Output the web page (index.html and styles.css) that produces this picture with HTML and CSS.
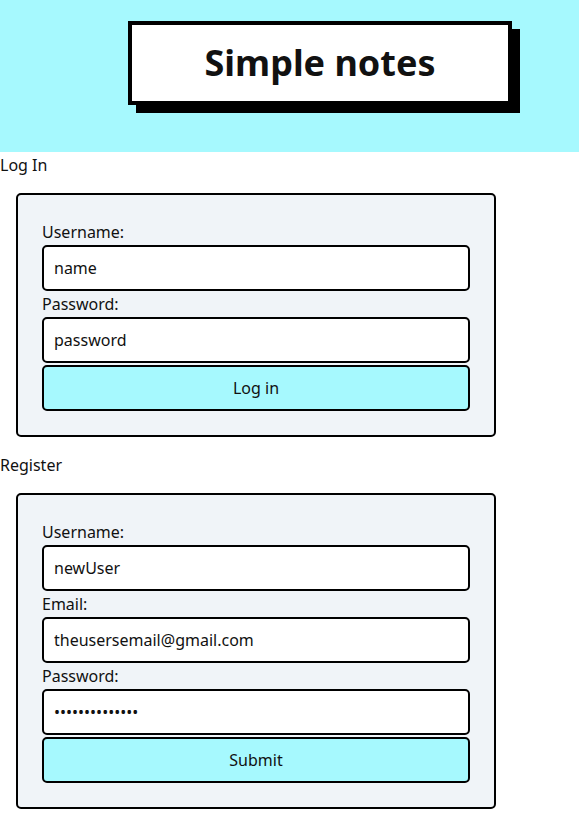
FILE: index.html
```html
<!DOCTYPE html>
<html lang="en">

<head>
    <meta charset="UTF-8" />
    <title>Simple notes</title>
    <link rel="stylesheet" href="styles.css">
</head>

<body>

    <header class="header">
        <h1 class="title">Simple notes</h1>
    </header>

    <p class="section-name">Log In</p>
    <form class="card">
        <label class="field-label" for="login-user">Username:</label>
        <input class="field" id="login-user" type="text" value="name">
        <label class="field-label" for="login-pass">Password:</label>
        <input class="field" id="login-pass" type="text" value="password">
        <button class="btn" type="button">Log in</button>
    </form>

    <p class="section-name">Register</p>
    <form class="card">
        <label class="field-label" for="reg-user">Username:</label>
        <input class="field" id="reg-user" type="text" value="newUser">
        <label class="field-label" for="reg-email">Email:</label>
        <input class="field" id="reg-email" type="email" value="theusersemail@gmail.com">
        <label class="field-label" for="reg-pass">Password:</label>
        <input class="field" id="reg-pass" type="password" value="supersecret123">
        <button class="btn" type="button">Submit</button>
    </form>

</body>

</html>
```

FILE: styles.css
```css
body {
    margin: 0;
    font-family: "Noto Sans", "Open Sans", sans-serif;
    font-size: 16px;
    color: #111;
}

.header {
    background: #a6f9fe;
    height: 152px;
    padding-top: 21px;
    box-sizing: border-box;
}

.title {
    margin: 0 0 0 128px;
    width: 384px;
    height: 84px;
    box-sizing: border-box;
    border: 4px solid #000;
    background: #fff;
    box-shadow: 8px 8px 0 #000;
    font-size: 36px;
    font-weight: bold;
    line-height: 75px;
    text-align: center;
}

.section-name {
    margin: 0;
    line-height: 26px;
}

.card {
    display: flex;
    flex-direction: column;
    width: 480px;
    box-sizing: border-box;
    margin: 15px 0 15px 16px;
    padding: 24px 24px;
    background: #f0f4f8;
    border: 2px solid #000;
    border-radius: 5px;
}

.field-label {
    line-height: 26px;
}

.field,
.btn {
    height: 46px;
    margin: 0;
    box-sizing: border-box;
    border: 2px solid #000;
    border-radius: 5px;
    font-family: inherit;
    font-size: 16px;
    color: #111;
}

.field {
    padding: 0 10px;
    background: #fff;
}

.btn {
    margin-top: 2px;
    background: #a6f9fe;
}
```
